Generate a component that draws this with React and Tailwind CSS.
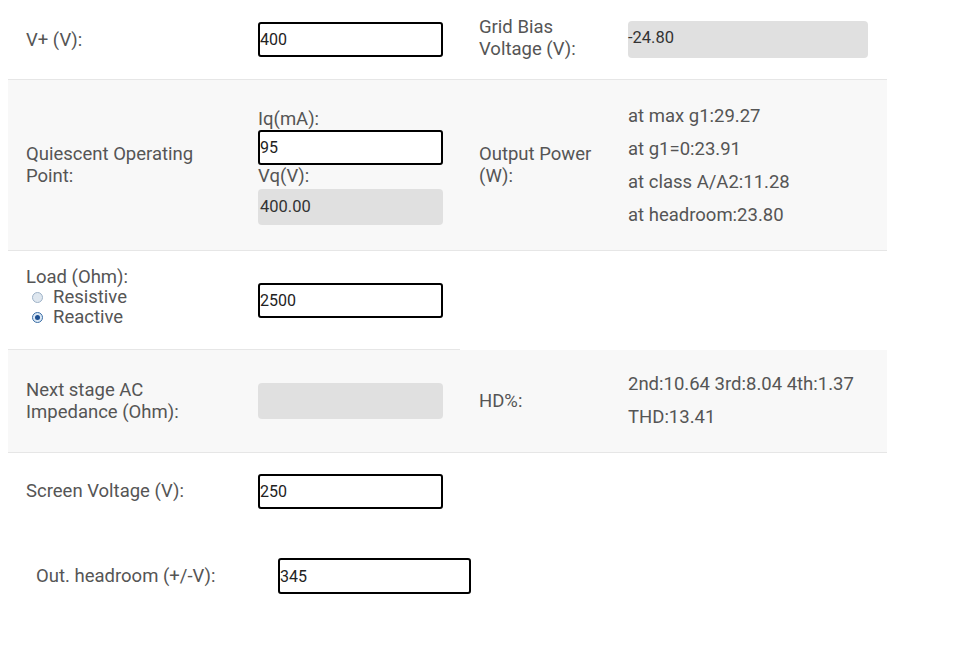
import React from 'react';

const font = { fontFamily: 'Roboto, "Liberation Sans", sans-serif' };

function Box({ value, gray }) {
  if (gray) {
    return (
      <div className="w-[185px] h-[36px] rounded-[4px] bg-[#e0e0e0] flex items-center pl-[2px] text-[16.5px] text-[#333]">
        {value}
      </div>
    );
  }
  return (
    <input
      type="text"
      defaultValue={value}
      className="w-[185px] h-[35px] border-2 border-black rounded-[3px] bg-white px-0 text-[16px] text-[#222] outline-none"
      style={font}
    />
  );
}

function Radio({ checked, label }) {
  return (
    <div className="flex items-center h-[20px] pl-[6px]">
      <span className={`w-[11px] h-[11px] rounded-full border flex items-center justify-center ${checked ? 'border-[#3b6ea5] bg-[#dbe8f5]' : 'border-[#9fb3c8] bg-[#dfe7ef]'}`}>
        {checked && <span className="w-[5px] h-[5px] rounded-full bg-[#1d4f91]" />}
      </span>
      <span className="ml-[10px]">{label}</span>
    </div>
  );
}

export default function App() {
  return (
    <div className="min-h-screen bg-white text-[18.5px] text-[#555] leading-[22px]" style={font}>
      <div className="ml-[8px] w-[879px]">
        {/* V+ / Grid bias */}
        <div className="flex h-[80px] border-b border-[#e6e6e6]">
          <div className="w-[452px] flex items-center pl-[18px]">
            <div className="w-[232px]">V+ (V):</div>
            <Box value="400" />
          </div>
          <div className="flex-1 flex items-center pl-[19px]">
            <div className="w-[149px] pb-[4px]">Grid Bias<br />Voltage (V):</div>
            <div className="w-[240px] h-[37px] rounded-[4px] bg-[#e0e0e0] flex items-center text-[16.5px] text-[#333] pb-[4px]">-24.80</div>
          </div>
        </div>

        {/* Quiescent / Output power */}
        <div className="flex h-[171px] bg-[#f8f8f8] border-b border-[#e6e6e6]">
          <div className="w-[452px] flex items-center pl-[18px]">
            <div className="w-[232px]">Quiescent Operating<br />Point:</div>
            <div className="flex flex-col pt-[2px]">
              <div>Iq(mA):</div>
              <Box value="95" />
              <div className="mb-[2px]">Vq(V):</div>
              <Box value="400.00" gray />
            </div>
          </div>
          <div className="flex-1 flex items-center pl-[19px]">
            <div className="w-[149px]">Output Power<br />(W):</div>
            <div className="flex flex-col leading-[33px] pt-[2px]">
              <div>at max g1:29.27</div>
              <div>at g1=0:23.91</div>
              <div>at class A/A2:11.28</div>
              <div>at headroom:23.80</div>
            </div>
          </div>
        </div>

        {/* Load */}
        <div className="flex h-[99px]">
          <div className="w-[452px] flex items-center pl-[18px] border-b border-[#e6e6e6]">
            <div className="w-[232px] pb-[6px]">
              <div className="leading-[20px]">Load (Ohm):</div>
              <Radio label="Resistive" />
              <Radio label="Reactive" checked />
            </div>
            <Box value="2500" />
          </div>
          <div className="flex-1" />
        </div>

        {/* Next stage / HD */}
        <div className="flex h-[103px] bg-[#f8f8f8] border-b border-[#e6e6e6]">
          <div className="w-[452px] flex items-center pl-[18px]">
            <div className="w-[232px]">Next stage AC<br />Impedance (Ohm):</div>
            <Box value="" gray />
          </div>
          <div className="flex-1 flex items-center pl-[19px]">
            <div className="w-[149px]">HD%:</div>
            <div className="flex flex-col leading-[33px]">
              <div>2nd:10.64 3rd:8.04 4th:1.37</div>
              <div>THD:13.41</div>
            </div>
          </div>
        </div>

        {/* Screen voltage */}
        <div className="flex h-[74px] items-center pl-[18px] pt-[2px]">
          <div className="w-[232px]">Screen Voltage (V):</div>
          <Box value="250" />
        </div>

        {/* Headroom */}
        <div className="flex items-center pl-[28px] mt-[31px]">
          <div className="w-[242px]">Out. headroom (+/-V):</div>
          <input
            type="text"
            defaultValue="345"
            className="w-[193px] h-[36px] border-2 border-black rounded-[3px] bg-white px-0 text-[16px] text-[#222] outline-none"
            style={font}
          />
        </div>
      </div>
    </div>
  );
}
